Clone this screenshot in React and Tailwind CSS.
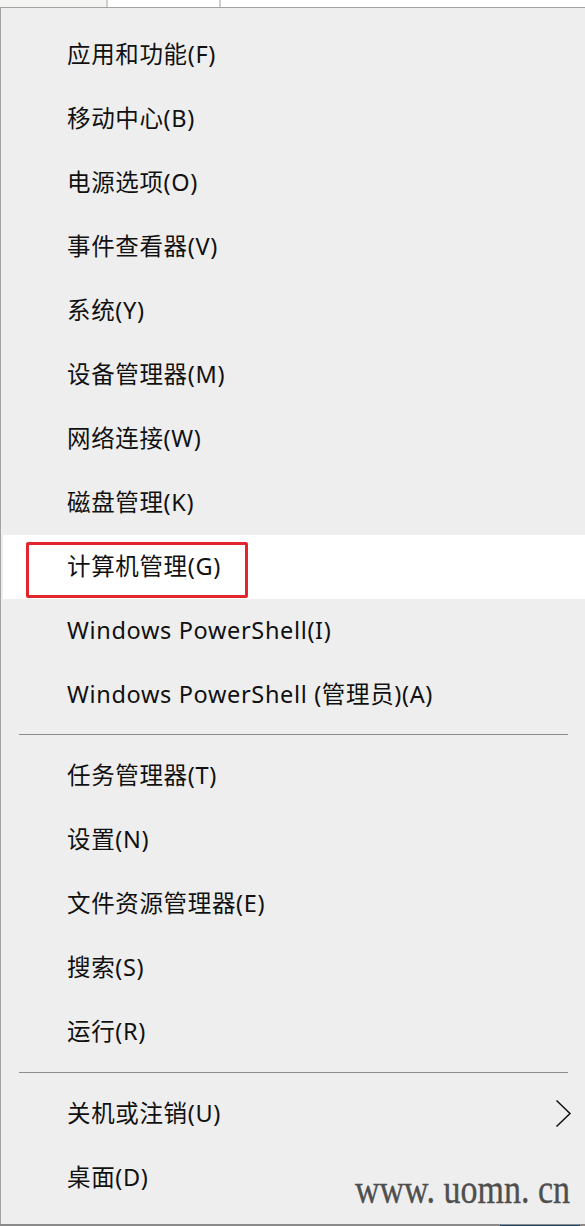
import React from "react";

const group1 = [
  "应用和功能(F)",
  "移动中心(B)",
  "电源选项(O)",
  "事件查看器(V)",
  "系统(Y)",
  "设备管理器(M)",
  "网络连接(W)",
  "磁盘管理(K)",
  "计算机管理(G)",
  "Windows PowerShell(I)",
  "Windows PowerShell (管理员)(A)",
];
const group2 = ["任务管理器(T)", "设置(N)", "文件资源管理器(E)", "搜索(S)", "运行(R)"];

function Row({ label, highlight, chevron }) {
  return (
    <div
      className={
        "relative ml-[2px] h-[64px] flex items-center pl-[64px] " +
        (highlight ? "bg-white" : "")
      }
    >
      <span className="leading-none -mt-[1px]">{label}</span>
      {highlight && (
        <div className="absolute left-[23px] top-[7px] w-[222px] h-[56px] border-[3px] border-[#e3262d] rounded-[2px]" />
      )}
      {chevron && (
        <svg
          className="absolute left-[551px] top-[17px]"
          width="18"
          height="30"
          viewBox="0 0 18 30"
          fill="none"
        >
          <polyline points="2.5,1.5 16,14.5 2.5,27.5" stroke="#111" strokeWidth="1.5" />
        </svg>
      )}
    </div>
  );
}

export default function App() {
  return (
    <div
      className="relative w-[585px] h-[1226px] bg-[#eeeeee] overflow-hidden text-[23.5px] tracking-[0.65px] text-[#111]"
      style={{ fontFamily: '"Noto Sans", "Noto Sans CJK SC", sans-serif' }}
    >
      <div className="flex h-[7px]">
        <div className="w-[106px] bg-[#f4f4f2]" />
        <div className="w-[2px] bg-[#cfcfcf]" />
        <div className="w-[111px] bg-white" />
        <div className="w-[2px] bg-[#cfcfcf]" />
        <div className="flex-1 bg-white" />
      </div>
      <div className="border-t border-l border-[#a3a3a3] h-[1217px] pt-[15px] flex flex-col">
        {group1.map((l, i) => (
          <Row key={l} label={l} highlight={i === 8} />
        ))}
        <div className="mt-[7px] mb-[9px] ml-[18px] mr-[17px] h-px bg-[#8c8c8c]" />
        {group2.map((l) => (
          <Row key={l} label={l} />
        ))}
        <div className="mt-[8px] mb-[9px] ml-[18px] mr-[17px] h-px bg-[#8c8c8c]" />
        <Row label="关机或注销(U)" chevron />
        <Row label="桌面(D)" />
      </div>
      <div className="absolute left-0 right-0 top-[1224px] h-[2px] bg-[#8a8a8a]" />
      <div className="absolute left-[500px] w-[80px] top-[1225px] h-px bg-[#1d4a6e]" />
      <div
        className="absolute left-[355px] top-[1176px] text-[34px] leading-[34px] tracking-[0px] text-[#4f4f4f] scale-y-125 origin-bottom"
        style={{ fontFamily: '"Liberation Serif", serif', WebkitTextStroke: "0.3px #4f4f4f" }}
      >
        www. uomn. cn
      </div>
    </div>
  );
}
